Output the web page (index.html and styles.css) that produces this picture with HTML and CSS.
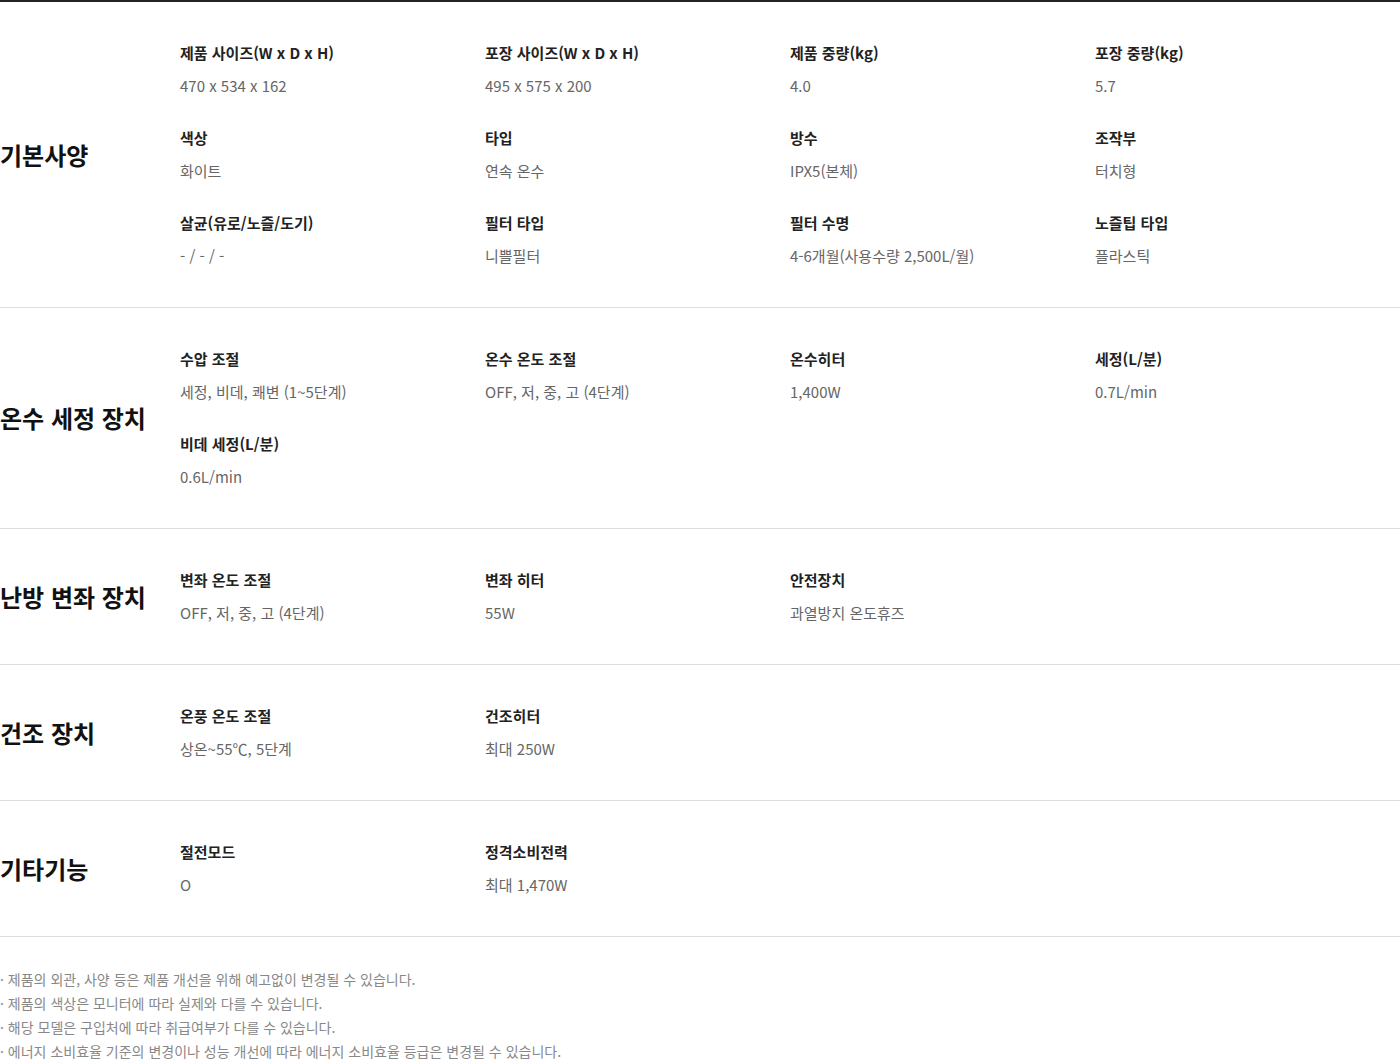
FILE: index.html
```html
<!DOCTYPE html>
<html lang="ko">
<head>
<meta charset="utf-8">
<link rel="stylesheet" href="styles.css">
</head>
<body>
<div class="spec">
  <section class="group">
    <h3 class="group-title">기본사양</h3>
    <dl class="items">
      <div class="item"><dt>제품 사이즈(W x D x H)</dt><dd>470 x 534 x 162</dd></div>
      <div class="item"><dt>포장 사이즈(W x D x H)</dt><dd>495 x 575 x 200</dd></div>
      <div class="item"><dt>제품 중량(kg)</dt><dd>4.0</dd></div>
      <div class="item"><dt>포장 중량(kg)</dt><dd>5.7</dd></div>
      <div class="item"><dt>색상</dt><dd>화이트</dd></div>
      <div class="item"><dt>타입</dt><dd>연속 온수</dd></div>
      <div class="item"><dt>방수</dt><dd>IPX5(본체)</dd></div>
      <div class="item"><dt>조작부</dt><dd>터치형</dd></div>
      <div class="item"><dt>살균(유로/노즐/도기)</dt><dd>- / - / -</dd></div>
      <div class="item"><dt>필터 타입</dt><dd>니쁠필터</dd></div>
      <div class="item"><dt>필터 수명</dt><dd>4-6개월(사용수량 2,500L/월)</dd></div>
      <div class="item"><dt>노즐팁 타입</dt><dd>플라스틱</dd></div>
    </dl>
  </section>
  <section class="group">
    <h3 class="group-title">온수 세정 장치</h3>
    <dl class="items">
      <div class="item"><dt>수압 조절</dt><dd>세정, 비데, 쾌변 (1~5단계)</dd></div>
      <div class="item"><dt>온수 온도 조절</dt><dd>OFF, 저, 중, 고 (4단계)</dd></div>
      <div class="item"><dt>온수히터</dt><dd>1,400W</dd></div>
      <div class="item"><dt>세정(L/분)</dt><dd>0.7L/min</dd></div>
      <div class="item"><dt>비데 세정(L/분)</dt><dd>0.6L/min</dd></div>
    </dl>
  </section>
  <section class="group">
    <h3 class="group-title">난방 변좌 장치</h3>
    <dl class="items">
      <div class="item"><dt>변좌 온도 조절</dt><dd>OFF, 저, 중, 고 (4단계)</dd></div>
      <div class="item"><dt>변좌 히터</dt><dd>55W</dd></div>
      <div class="item"><dt>안전장치</dt><dd>과열방지 온도휴즈</dd></div>
    </dl>
  </section>
  <section class="group">
    <h3 class="group-title">건조 장치</h3>
    <dl class="items">
      <div class="item"><dt>온풍 온도 조절</dt><dd>상온~55℃, 5단계</dd></div>
      <div class="item"><dt>건조히터</dt><dd>최대 250W</dd></div>
    </dl>
  </section>
  <section class="group">
    <h3 class="group-title">기타기능</h3>
    <dl class="items">
      <div class="item"><dt>절전모드</dt><dd>O</dd></div>
      <div class="item"><dt>정격소비전력</dt><dd>최대 1,470W</dd></div>
    </dl>
  </section>
  <ul class="notes">
    <li>· 제품의 외관, 사양 등은 제품 개선을 위해 예고없이 변경될 수 있습니다.</li>
    <li>· 제품의 색상은 모니터에 따라 실제와 다를 수 있습니다.</li>
    <li>· 해당 모델은 구입처에 따라 취급여부가 다를 수 있습니다.</li>
    <li>· 에너지 소비효율 기준의 변경이나 성능 개선에 따라 에너지 소비효율 등급은 변경될 수 있습니다.</li>
  </ul>
</div>
</body>
</html>
```
FILE: styles.css
```css
html, body {
  margin: 0;
  padding: 0;
  background: #fff;
}
body {
  font-family: "Noto Sans CJK KR", "Noto Sans", sans-serif;
  color: #111;
}
.spec {
  border-top: 2px solid #222;
}
.group {
  display: flex;
  align-items: center;
  border-bottom: 1px solid #ddd;
  padding: 40px 0;
}
.group-title {
  width: 180px;
  flex: none;
  margin: 0;
  font-size: 24px;
  font-weight: 700;
  line-height: 30px;
  color: #111;
}
.items {
  flex: 1;
  margin: 0;
  display: grid;
  grid-template-columns: repeat(4, 305px);
  row-gap: 30px;
}
.item dt {
  font-size: 15px;
  font-weight: 700;
  line-height: 22px;
  color: #222;
}
.item dd {
  margin: 11px 0 0;
  font-size: 15px;
  line-height: 22px;
  color: #666;
}
.notes {
  list-style: none;
  margin: 30px 0 0;
  padding: 0;
}
.notes li {
  font-size: 14px;
  line-height: 24px;
  color: #888;
}
```
